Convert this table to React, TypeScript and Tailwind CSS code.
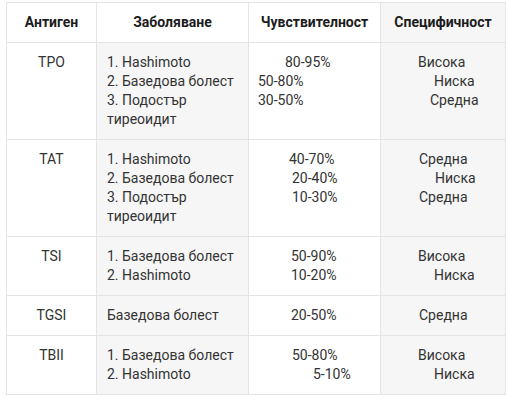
import React from "react";

type Line = { t: string; pl: number };

const rows: {
  ag: string;
  dis: string[];
  sens: Line[];
  spec: Line[];
}[] = [
  {
    ag: "TPO",
    dis: ["1. Hashimoto", "2. Базедова болест", "3. Подостър", "тиреоидит"],
    sens: [
      { t: "80-95%", pl: 36 },
      { t: "50-80%", pl: 9 },
      { t: "30-50%", pl: 9 },
    ],
    spec: [
      { t: "Висока", pl: 37 },
      { t: "Ниска", pl: 53 },
      { t: "Средна", pl: 49 },
    ],
  },
  {
    ag: "TAT",
    dis: ["1. Hashimoto", "2. Базедова болест", "3. Подостър", "тиреоидит"],
    sens: [
      { t: "40-70%", pl: 40 },
      { t: "20-40%", pl: 43 },
      { t: "10-30%", pl: 43 },
    ],
    spec: [
      { t: "Средна", pl: 38 },
      { t: "Ниска", pl: 54 },
      { t: "Средна", pl: 38 },
    ],
  },
  {
    ag: "TSI",
    dis: ["1. Базедова болест", "2. Hashimoto"],
    sens: [
      { t: "50-90%", pl: 42 },
      { t: "10-20%", pl: 42 },
    ],
    spec: [
      { t: "Висока", pl: 37 },
      { t: "Ниска", pl: 53 },
    ],
  },
  {
    ag: "TGSI",
    dis: ["Базедова болест"],
    sens: [{ t: "20-50%", pl: 42 }],
    spec: [{ t: "Средна", pl: 38 }],
  },
  {
    ag: "TBII",
    dis: ["1. Базедова болест", "2. Hashimoto"],
    sens: [
      { t: "50-80%", pl: 43 },
      { t: "5-10%", pl: 64 },
    ],
    spec: [
      { t: "Висока", pl: 37 },
      { t: "Ниска", pl: 53 },
    ],
  },
];

export default function App() {
  return (
    <div
      className="bg-white w-[506px] h-[419px] pt-[2px] pl-[6px] text-[14px] leading-[19px] text-[#333333]"
      style={{ fontFamily: "Roboto, 'Noto Sans', sans-serif" }}
    >
      <table className="table-fixed border-collapse w-[499px]">
        <colgroup>
          <col className="w-[90px]" />
          <col className="w-[152px]" />
          <col className="w-[132px]" />
          <col className="w-[125px]" />
        </colgroup>
        <thead>
          <tr className="font-bold text-[#1c1c1c]">
            <th className="border border-[#e4e4e4] py-[10px] text-center font-bold">Антиген</th>
            <th className="border border-[#e4e4e4] py-[10px] text-center font-bold">Заболяване</th>
            <th className="border border-[#e4e4e4] py-[10px] text-center font-bold">Чувствителност</th>
            <th className="border border-[#e4e4e4] py-[10px] text-center font-bold bg-[#f6f6f6]">Специфичност</th>
          </tr>
        </thead>
        <tbody>
          {rows.map((r) => (
            <tr key={r.ag}>
              <td className="border border-[#e4e4e4] py-[10px] text-center align-top">{r.ag}</td>
              <td className="border border-[#e4e4e4] py-[10px] pl-[10px] pr-[4px] align-top bg-[#f6f6f6]">
                {r.dis.map((d, i) => (
                  <div key={i}>{d}</div>
                ))}
              </td>
              <td className="border border-[#e4e4e4] py-[10px] align-top">
                {r.sens.map((l, i) => (
                  <div key={i} style={{ paddingLeft: l.pl }}>
                    {l.t}
                  </div>
                ))}
              </td>
              <td className="border border-[#e4e4e4] py-[10px] align-top bg-[#f6f6f6]">
                {r.spec.map((l, i) => (
                  <div key={i} style={{ paddingLeft: l.pl }}>
                    {l.t}
                  </div>
                ))}
              </td>
            </tr>
          ))}
        </tbody>
      </table>
    </div>
  );
}
